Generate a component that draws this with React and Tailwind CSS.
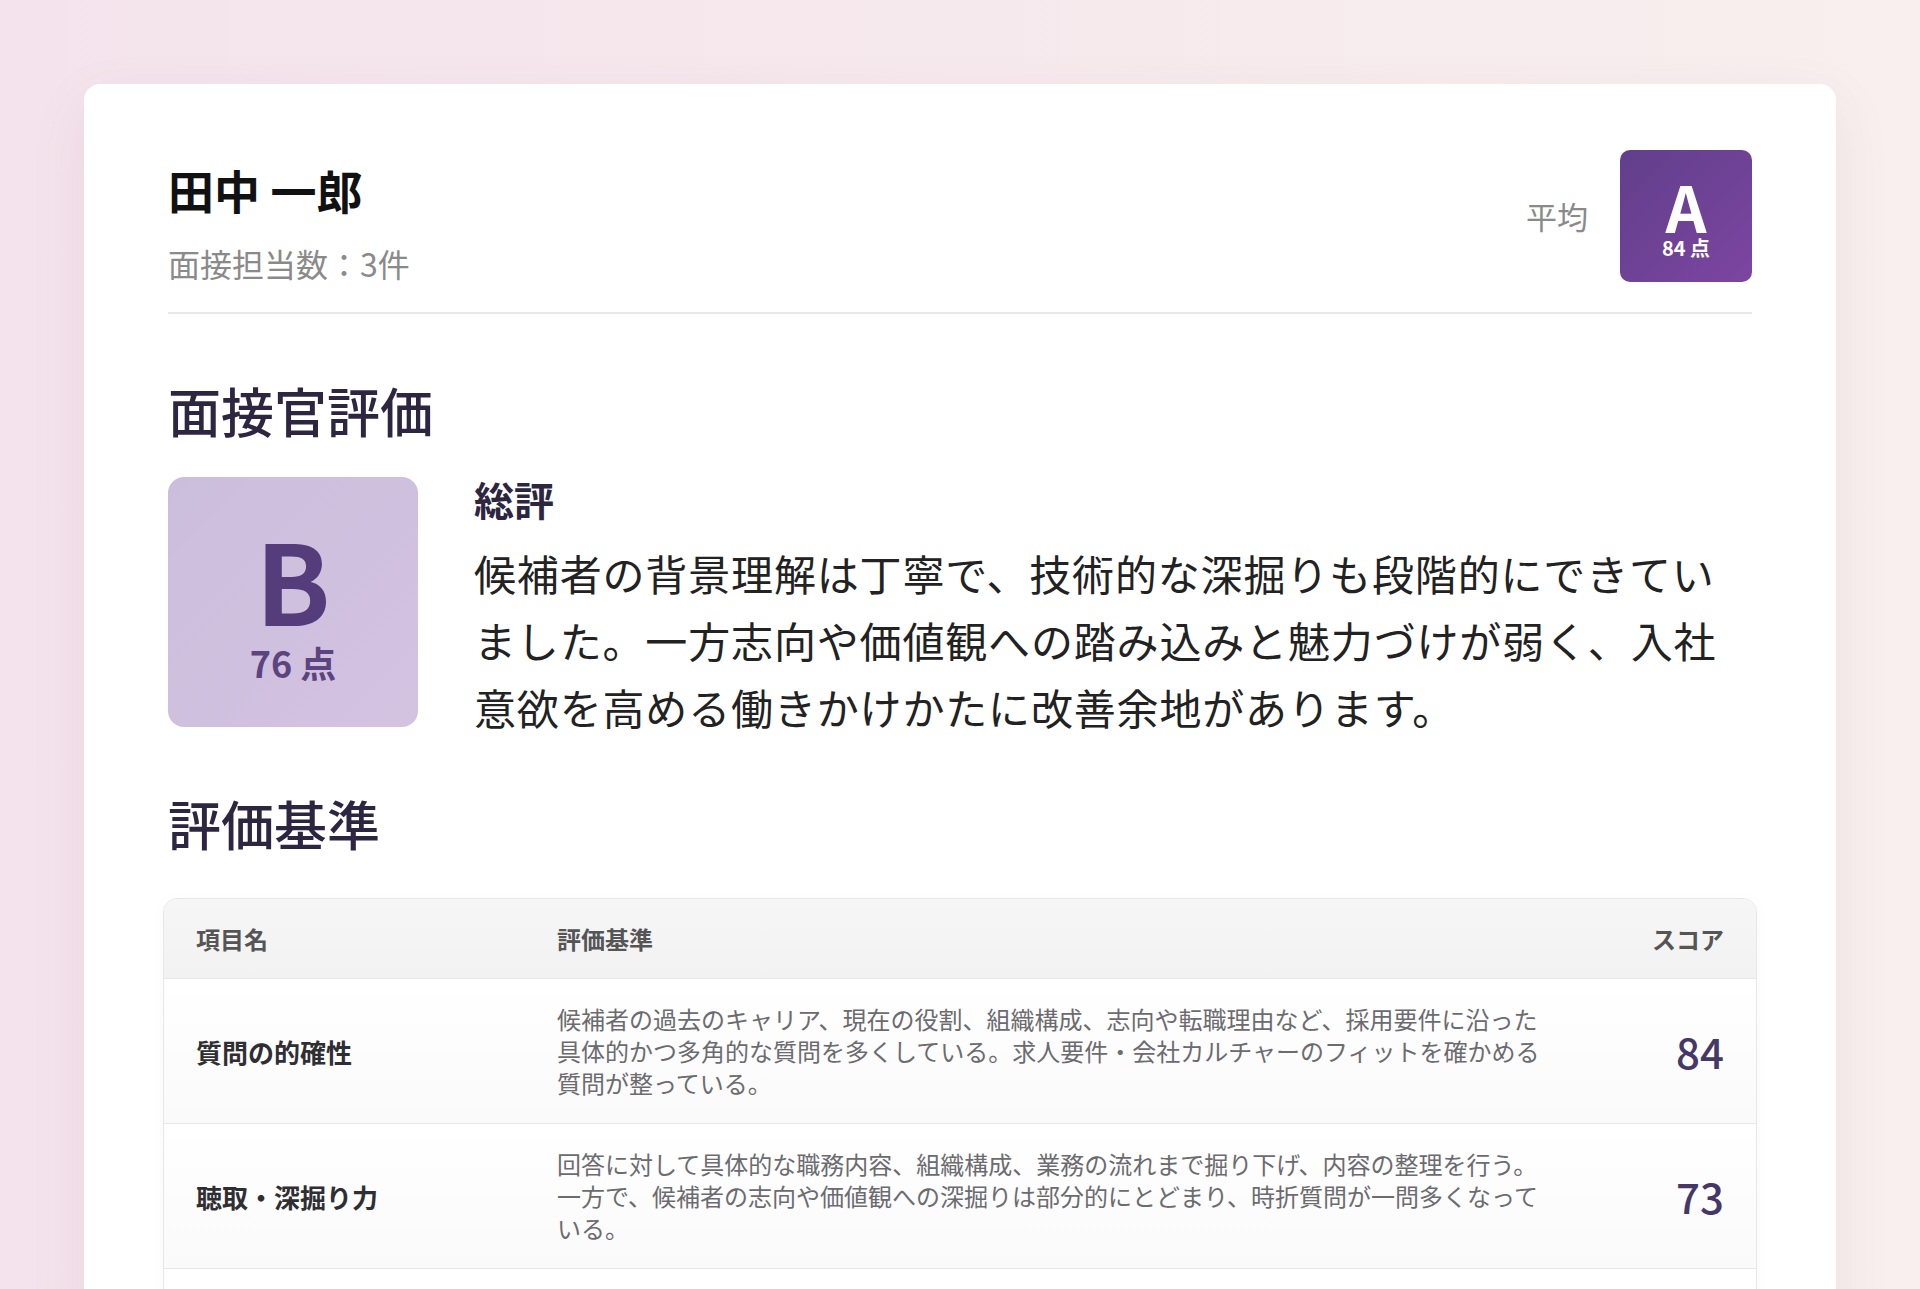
const rows = [
  {
    name: "質問の的確性",
    text: "候補者の過去のキャリア、現在の役割、組織構成、志向や転職理由など、採用要件に沿った具体的かつ多角的な質問を多くしている。求人要件・会社カルチャーのフィットを確かめる質問が整っている。",
    score: 84,
  },
  {
    name: "聴取・深掘り力",
    text: "回答に対して具体的な職務内容、組織構成、業務の流れまで掘り下げ、内容の整理を行う。一方で、候補者の志向や価値観への深掘りは部分的にとどまり、時折質問が一問多くなっている。",
    score: 73,
  },
];

function ScoreRow({ row }) {
  return (
    <div className="grid grid-cols-[393px_996px_1fr] items-center border-t border-[#e7e7e9] bg-linear-to-b from-white to-[#fafafa] py-[24px]">
      <div className="pl-[32px] text-[26px] font-bold text-[#2f2f33]">{row.name}</div>
      <p className="text-[24px] leading-[32px] text-[#6b6b70]">{row.text}</p>
      <div className="pr-[32px] text-right text-[42px] font-medium leading-none text-[#463866]">{row.score}</div>
    </div>
  );
}

export default function App() {
  return (
    <div className="min-h-screen bg-linear-to-r from-[#f4e3ec] to-[#f8efee] px-[84px] pt-[84px] font-['Noto_Sans_CJK_JP','Noto_Sans',sans-serif]">
      <div className="rounded-[16px] bg-white px-[84px] pt-[66px] pb-24 shadow-[0_20px_60px_rgba(130,70,100,0.08)]">
        <header className="flex items-start justify-between border-b-2 border-[#e8e8ea] pb-[26px]">
          <div className="pt-[6px]">
            <h1 className="text-[46px] font-bold leading-[66px] text-[#111]">田中 一郎</h1>
            <p className="mt-[19px] text-[32px] leading-[45px] text-[#8a8a8a]">面接担当数：3件</p>
          </div>
          <div className="flex items-center gap-8">
            <span className="text-[31px] text-[#8a8a8a]">平均</span>
            <div className="flex h-[132px] w-[132px] flex-col items-center justify-center rounded-[10px] bg-linear-to-br from-[#613f8b] to-[#7c45a1] text-white">
              <span className="text-[64px] font-bold leading-[64px]">A</span>
              <span className="text-[20px] font-semibold leading-[22px]">84 点</span>
            </div>
          </div>
        </header>

        <h2 className="mt-[60px] text-[53px] font-medium leading-[73px] text-[#2d2640]">面接官評価</h2>
        <div className="mt-[30px] flex items-start gap-[56px]">
          <div className="flex h-[250px] w-[250px] shrink-0 flex-col items-center justify-center rounded-[16px] bg-linear-to-br from-[#cbbedc] to-[#d4c2e1] text-[#553c7a]">
            <span className="text-[110px] font-bold leading-[110px]">B</span>
            <span className="mt-[10px] text-[36px] font-semibold leading-[38px] text-[#5b4480]">76 点</span>
          </div>
          <div className="flex-1">
            <h3 className="text-[40px] font-bold leading-[44px] text-[#2d2640]">総評</h3>
            <p className="mt-[18px] text-[42px] leading-[67px] tracking-[0.02em] text-[#222]">
              候補者の背景理解は丁寧で、技術的な深掘りも段階的にできていました。一方志向や価値観への踏み込みと魅力づけが弱く、入社意欲を高める働きかけかたに改善余地があります。
            </p>
          </div>
        </div>

        <h2 className="mt-[47px] text-[53px] font-medium leading-[73px] text-[#2d2640]">評価基準</h2>
        <div className="-mx-[5px] mt-[38px] overflow-hidden rounded-t-[14px] border border-[#e7e7e9] shadow-[0_4px_16px_rgba(0,0,0,0.03)]">
          <div className="grid h-[79px] grid-cols-[393px_996px_1fr] items-center bg-linear-to-b from-[#f6f6f7] to-[#f2f2f3] text-[24px] font-bold text-[#555]">
            <span className="pl-[32px]">項目名</span>
            <span>評価基準</span>
            <span className="pr-[32px] text-right">スコア</span>
          </div>
          {rows.map((row) => (
            <ScoreRow key={row.name} row={row} />
          ))}
          <div className="h-[145px] border-t border-[#e7e7e9] bg-linear-to-b from-white to-[#fafafa]"></div>
        </div>
      </div>
    </div>
  );
}
